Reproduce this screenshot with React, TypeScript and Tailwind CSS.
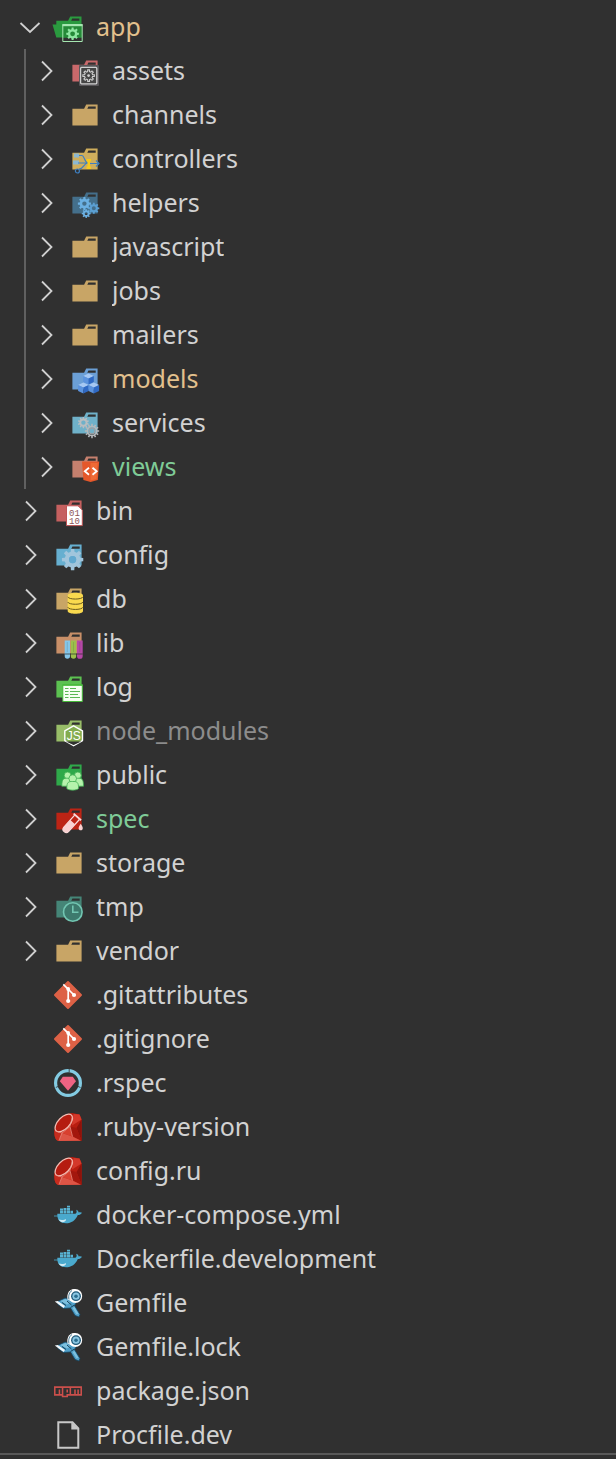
import { useState } from 'react'
import type { ReactNode } from 'react'
import { clsx } from 'clsx'
import { FaNpm } from 'react-icons/fa'

type Status = 'modified' | 'untracked' | 'ignored'

interface TreeNode {
  name: string
  icon: ReactNode
  status?: Status
  folder?: boolean
  children?: TreeNode[]
}

// Outline of a cog, used by most of the folder badges
function cog(cx: number, cy: number, r: number, teeth = 8, depth = 0.26) {
  const step = (Math.PI * 2) / teeth
  const inner = r * (1 - depth)
  const points: string[] = []
  for (let i = 0; i < teeth; i++) {
    const a = i * step - Math.PI / 2
    const corners = [
      [inner, -0.3],
      [r, -0.2],
      [r, 0.2],
      [inner, 0.3],
    ]
    corners.forEach(([d, t]) => {
      points.push(`${(cx + d * Math.cos(a + t * step)).toFixed(2)} ${(cy + d * Math.sin(a + t * step)).toFixed(2)}`)
    })
  }
  return `M${points.join('L')}Z`
}

function ring(cx: number, cy: number, r: number) {
  return `M${cx - r} ${cy}a${r} ${r} 0 1 0 ${r * 2} 0a${r} ${r} 0 1 0 ${-r * 2} 0Z`
}

function Glyph({ children }: { children: ReactNode }) {
  return (
    <svg viewBox="0 0 32 32" className="size-8 shrink-0" aria-hidden="true">
      {children}
    </svg>
  )
}

function Folder({ color, children }: { color: string; children?: ReactNode }) {
  return (
    <Glyph>
      <path fill={color} d="M27.5 5.5H18.2L16.1 9.7H4.4V26.5H29.6V5.5Zm.2 4.2H19.3l1.1-2.1h7.3Z" />
      {children}
    </Glyph>
  )
}

function Cog({ x, y, r, hole, fill, teeth }: { x: number; y: number; r: number; hole: number; fill: string; teeth?: number }) {
  return <path fill={fill} fillRule="evenodd" d={cog(x, y, r, teeth) + ring(x, y, hole)} />
}

function Cube({ x, y }: { x: number; y: number }) {
  return (
    <g transform={`translate(${x} ${y})`}>
      <path fill="#a6c8f3" d="M0-5.4 5.3-3 0-.4-5.3-3Z" />
      <path fill="#5b93de" d="M-5.3-3 0-.4V5.6L-5.3 3Z" />
      <path fill="#2f69c4" d="M5.3-3 0-.4V5.6L5.3 3Z" />
    </g>
  )
}

const plainFolder = <Folder color="#c8a566" />

const appIcon = (
  <Glyph>
    <path fill="#2a9a3f" d="M27.4 5.5H18.2L16.1 9.7H4.3V13.5H.5L4.3 26.5H29.5V5.5Zm0 4.2H19.2l1-2.1h7.2Z" />
    <path fill="#258a38" d="M11 14h19v12.5H11Z" />
    <path fill="none" stroke="#a5e6b0" d="M10.8 13.5H30.2V30.5H10.8Z" />
    <path fill="#a5e6b0" d="M10.5 13h20v2.2h-20Z" />
    <Cog x={20.6} y={22.8} r={6.4} hole={2.4} fill="#8ee6a0" />
  </Glyph>
)

const assetsIcon = (
  <Folder color="#c9696b">
    <rect x="11" y="10" width="20" height="21" rx="1" fill="#59575a" />
    <rect x="12.6" y="12.4" width="16.2" height="16.4" rx="1" fill="#454545" stroke="#d0d0d0" strokeWidth="1.3" />
    <path d={cog(20.6, 20.6, 5.8, 8, 0.3)} fill="none" stroke="#d0d0d0" strokeWidth="1.1" />
    <circle cx="20.6" cy="20.6" r="1.4" fill="#d0d0d0" />
  </Folder>
)

const controllersIcon = (
  <Folder color="#cfae5c">
    <path fill="#8cb8cf" d="M6 10.5h5v4H6ZM5 17.5h6v4H5Z" />
    <g fill="none" stroke="#3f7fc0" strokeWidth="1.2">
      <path d="M11 12.5h3c2.5 0 2 6.5 6 7.5M10 20h10M11 26c5 0 4-5.5 9-6M22 20.5h8M28 17.5l3 3-3 3" />
      <circle cx="9.4" cy="28" r="2" fill="#303030" />
    </g>
    <path fill="#f6ca1c" d="M18.5 16h4.5v2l-1 1v4l1 1v2h-4.5v-2l1-1v-4l-1-1Z" />
  </Folder>
)

const helpersIcon = (
  <Folder color="#446f8b">
    <Cog x={16.4} y={16.6} r={6.6} hole={2.2} fill="#6bb0e2" />
    <Cog x={25.8} y={21.3} r={5.6} hole={2} fill="#5b9fd2" />
    <Cog x={18.2} y={26.6} r={4.5} hole={1.5} fill="#6bb0e2" />
  </Folder>
)

const modelsIcon = (
  <Folder color="#6b9fd6">
    <Cube x={20.5} y={16} />
    <Cube x={15.4} y={25} />
    <Cube x={25.8} y={25} />
  </Folder>
)

const servicesIcon = (
  <Folder color="#6fb1c9">
    <Cog x={15.4} y={15.6} r={5.6} hole={2.2} fill="#b9bdc0" teeth={10} />
    <Cog x={24} y={24} r={7.2} hole={3.8} fill="#b4b8bb" teeth={12} />
    <circle cx="24" cy="24" r="2.8" fill="none" stroke="#9aa0a4" strokeWidth="1.2" />
  </Folder>
)

const viewsIcon = (
  <Folder color="#c5806e">
    <path fill="#e4572a" d="M14 10.5H31.2L29.8 29 22.6 31 15.4 29Z" />
    <path fill="#ef6a35" d="M22.6 12H29.7L28.5 28 22.6 29.5Z" />
    <path fill="none" stroke="#fff" strokeWidth="1.8" d="M21 16.8 16.8 20.3 21 23.8M24.5 16.8l4.2 3.5-4.2 3.5" />
  </Folder>
)

const binIcon = (
  <Folder color="#c5605f">
    <path fill="#fff" stroke="#bf5556" d="M14.5 10.8H26L30.3 15V30.6H14.5Z" />
    <g fill="#8c5658" fontSize="9" fontFamily="Liberation Mono, monospace" textAnchor="middle">
      <text x="22.4" y="20.5">01</text>
      <text x="22.4" y="28.5">10</text>
    </g>
  </Folder>
)

const configIcon = (
  <Folder color="#66afd0">
    <Cog x={20.6} y={20.6} r={10.8} hole={3.6} fill="#a1c5dc" />
    <circle cx="20.6" cy="20.6" r="3.6" fill="#62a9d0" />
  </Folder>
)

const dbIcon = (
  <Folder color="#c8a566">
    <path fill="#f9d94e" d="M15.7 12.5c0-3.6 15.3-3.6 15.3 0V28c0 3.7-15.3 3.7-15.3 0Z" />
    <path fill="none" stroke="#6b5a1e" d="M15.7 13.8c1 3 14.3 3 15.3 0M15.7 19c1 3 14.3 3 15.3 0M15.7 24.2c1 3 14.3 3 15.3 0" />
  </Folder>
)

const libIcon = (
  <Folder color="#c88f68">
    <path fill="#85c6ea" d="M12.700 13.500H18V29a2 2 0 0 1-5.300 0Z" />
    <path fill="#9cbf4b" d="M18.800 13.500h5.400V29a2 2 0 0 1-5.400 0Z" />
    <path fill="#b547a6" d="M25 13.500h5.700V29a2 2 0 0 1-5.700 0Z" />
    <path stroke="#303030" strokeOpacity=".65" strokeWidth="1.100" d="M12.700 27H30.700" />
    <path stroke="#303030" strokeOpacity=".2" strokeWidth=".8" d="M15.300 15v10M21.500 15v10M27.800 15v10" />
  </Folder>
)

const logIcon = (
  <Folder color="#5cc151">
    <path fill="#f6fff2" stroke="#45b939" d="M10.8 13.8H30.3V30.5H10.8Z" />
    <path fill="#45b939" d="M10.5 13.3h20v1.5h-20Z" />
    <path stroke="#59b852" strokeWidth="1.1" d="M13 17.5h3.500M18 17.500h6M13 20.500h3.500M18 20.500h10M13 23.500h3.500M18 23.500h8M13 26.500h3.500M18 26.500h10" />
  </Folder>
)

const nodeModulesIcon = (
  <Folder color="#98bd68">
    <path fill="#83ac4f" stroke="#fff" strokeWidth="1.4" strokeLinejoin="round" d="M21.6 10.8 30.5 15.8V25.6L21.6 30.7 12.8 25.6V15.8Z" />
    <path fill="#303030" d="M13.9 26.5H29.3L21.6 30Z" />
    <text x="21.8" y="25" textAnchor="middle" fontSize="12" fontFamily="Liberation Sans, sans-serif" fill="#fff">JS</text>
  </Folder>
)

const publicIcon = (
  <Folder color="#2fa94a">
    <g fill="#b5f2ac" stroke="#3fae52" strokeWidth=".8">
      <circle cx="15.6" cy="16.4" r="3.4" />
      <circle cx="25.8" cy="16.4" r="3.4" />
      <path d="M9.8 27.2c0-8 2-8 6-8s5 2 5 8ZM31.5 27.2c0-8-2-8-6-8s-5 2-5 8Z" />
      <circle cx="20.7" cy="19.6" r="3.8" />
      <path d="M14.8 29.500c0-7 2-7 5.900-7s5.900 0 5.900 7c-2 2.200-9.800 2.200-11.800 0Z" />
    </g>
  </Folder>
)

const specIcon = (
  <Folder color="#bd2415">
    <g transform="rotate(42 19 21)">
      <path fill="#bd2415" stroke="#f8dcdc" strokeWidth="1.3" d="M15.8 12v16a3.2 3.2 0 0 0 6.4 0V12" />
      <path fill="#fad1d1" d="M15.8 18.5h6.4V28a3.2 3.2 0 0 1-6.4 0Z" />
      <path stroke="#f8dcdc" strokeWidth="1.8" d="M14 11.5h10" />
    </g>
    <path fill="#fad1d1" d="M28.7 20.8c3 4 2.5 6.5 0 6.5s-3-2.5 0-6.5Z" />
  </Folder>
)

const tmpIcon = (
  <Folder color="#458577">
    <circle cx="20.8" cy="21" r="9.3" fill="#3d7a6d" stroke="#72c6b2" strokeWidth="1.6" />
    <path fill="none" stroke="#72c6b2" strokeWidth="1.6" d="M20.8 14.5V21.3H26.5" />
  </Folder>
)

const gitIcon = (
  <Glyph>
    <path fill="#dd6146" stroke="#dd6146" strokeWidth="2" strokeLinejoin="round" d="M16 3 29 16 16 29 3 16Z" />
    <path fill="none" stroke="#fff" strokeWidth="1.7" d="M11.3 5.3 22 16M16.2 10v12" />
    <circle cx="16.2" cy="10" r="1.9" fill="#fff" />
    <circle cx="22" cy="16" r="2.1" fill="#fff" />
    <circle cx="16.2" cy="22" r="2.1" fill="#fff" />
  </Glyph>
)

const rspecIcon = (
  <Glyph>
    <circle cx="16" cy="16" r="12.4" fill="none" stroke="#83cbe2" strokeWidth="3.2" />
    <path stroke="#303030" strokeWidth=".8" d="M17.2 2v3.5M3.8 20.5 7 19M25 19l3.5 1.5" />
    <path fill="#ee6383" d="M10.8 9.8H20.8L24 14.2 16 23.8 7.8 14.2Z" />
  </Glyph>
)

const rubyIcon = (
  <Glyph>
    <path fill="#b81d10" d="M2.500 18C6 9 13 2.500 20 2L27.500 3.500 29.600 8.500V29.800L7 30C3 29.500 2 25 2.500 18Z" />
    <path fill="#d4382a" d="M21.500 3 27.500 3.500 29.600 8.500 20 14.500Z" />
    <path fill="#8f120a" d="M29.600 8.500 24.500 17 29.600 29.800Z" />
    <path fill="#d8402f" d="M10 22 18 15.500 20.500 25.500Z" />
    <path fill="#a3170d" d="M18 15.500 24.500 17 29.600 29.800 20.500 25.500Z" />
    <path fill="#dd5546" d="M10 22 20.500 25.500 29 29.800 7 30Z" />
    <path fill="#c72c1e" d="M2.500 19 10 22 7 30C3 29.500 2 25 2.500 19Z" />
    <ellipse cx="11.800" cy="12" rx="11" ry="5.800" fill="#b51c10" stroke="#f3bdb4" strokeWidth="1.200" transform="rotate(-46 11.800 12)" />
    <path fill="none" stroke="#ef9a8e" strokeWidth=".7" d="M3.500 20 10 22 18 15.500 20.500 5M10 22 7 29.500M18 15.500 20.500 25.500" />
  </Glyph>
)

const dockerIcon = (
  <Glyph>
    <path fill="#58b3d3" d="M8 11.8h3v2.7H8ZM11.5 11.8h3v2.7h-3ZM15 11.8h3v2.7h-3ZM11.5 9h3v2.4h-3ZM8 9.400h3v2H8ZM15 9h3v2.400h-3ZM15 6.800h3v1.800h-3ZM18.500 11.800h2.500v2.700h-2.500Z" />
    <path fill="#4aa9cd" d="M5.300 14.800H22.500C24.800 14.800 25 12.800 24.200 10.800 26 11.300 26.500 12.500 26.700 13.500 28 13 29 13.300 30 13.700 29 15.500 27.500 16 25.800 16 23.500 21.500 19.500 24.300 14 24.300 8.500 24.300 5 21.500 5.300 14.800Z" />
    <path fill="#cfe9f2" d="M6.500 20.500c3 .8 6 .5 7.500-.5.500 2-1.500 3-4 3.200-1.500-.5-2.800-1.500-3.500-2.700Z" />
    <path stroke="#4aa9cd" strokeWidth=".8" d="M2 17H8" />
  </Glyph>
)

const bundlerIcon = (
  <Glyph>
    <path fill="#4f9fc8" stroke="#17435c" strokeWidth=".8" d="M5.500 14.500 13 11 19 12 24 16.500 22.500 18.500 28 27.500 27 30 23 28.500 18.500 21 11.500 21.500 6 17.500Z" />
    <path fill="#f2f7fa" d="M2.800 14.500 5.800 14 13 19 11.500 21Z" />
    <path fill="#7dc0de" d="M8.500 14 13.500 12 18.500 15.500 15 17.500ZM20.500 21 22.500 20 26.500 26.800 24.500 27.500Z" />
    <path fill="none" stroke="#17435c" strokeWidth="1" d="M10 15.500 14 18.500M15 14 19.500 18M18.500 20.500 22.500 18" />
    <path fill="#fff" d="M15.500 12.500C14.500 6 17.500 1.800 23 2L25 15 20 14.500Z" />
    <circle cx="23.300" cy="9" r="6.900" fill="#fff" />
    <circle cx="24" cy="9.200" r="4.900" fill="#1d5878" />
    <circle cx="24" cy="9.200" r="3.600" fill="#8ac6e2" />
    <circle cx="24" cy="9.200" r="1.800" fill="#2b6f91" />
    <path fill="none" stroke="#245f7d" strokeWidth=".8" d="M17 12.500C16 8.500 17.500 5 20 3.500" />
  </Glyph>
)

const npmIcon = (
  <span className="flex size-8 shrink-0 items-center justify-center text-[#cb4f4b]">
    <FaNpm size={28} aria-hidden="true" />
  </span>
)

const fileIcon = (
  <Glyph>
    <path fill="none" stroke="#c8c8c8" strokeWidth="2" d="M6.3 3.3H20.5L26.3 9.5V28.8H6.3Z" />
    <path fill="#c8c8c8" d="M19.3 3v7.5H27Z" />
  </Glyph>
)

const tree: TreeNode[] = [
  {
    name: 'app',
    icon: appIcon,
    status: 'modified',
    folder: true,
    children: [
      { name: 'assets', icon: assetsIcon, folder: true },
      { name: 'channels', icon: plainFolder, folder: true },
      { name: 'controllers', icon: controllersIcon, folder: true },
      { name: 'helpers', icon: helpersIcon, folder: true },
      { name: 'javascript', icon: plainFolder, folder: true },
      { name: 'jobs', icon: plainFolder, folder: true },
      { name: 'mailers', icon: plainFolder, folder: true },
      { name: 'models', icon: modelsIcon, folder: true, status: 'modified' },
      { name: 'services', icon: servicesIcon, folder: true },
      { name: 'views', icon: viewsIcon, folder: true, status: 'untracked' },
    ],
  },
  { name: 'bin', icon: binIcon, folder: true },
  { name: 'config', icon: configIcon, folder: true },
  { name: 'db', icon: dbIcon, folder: true },
  { name: 'lib', icon: libIcon, folder: true },
  { name: 'log', icon: logIcon, folder: true },
  { name: 'node_modules', icon: nodeModulesIcon, folder: true, status: 'ignored' },
  { name: 'public', icon: publicIcon, folder: true },
  { name: 'spec', icon: specIcon, folder: true, status: 'untracked' },
  { name: 'storage', icon: plainFolder, folder: true },
  { name: 'tmp', icon: tmpIcon, folder: true },
  { name: 'vendor', icon: plainFolder, folder: true },
  { name: '.gitattributes', icon: gitIcon },
  { name: '.gitignore', icon: gitIcon },
  { name: '.rspec', icon: rspecIcon },
  { name: '.ruby-version', icon: rubyIcon },
  { name: 'config.ru', icon: rubyIcon },
  { name: 'docker-compose.yml', icon: dockerIcon },
  { name: 'Dockerfile.development', icon: dockerIcon },
  { name: 'Gemfile', icon: bundlerIcon },
  { name: 'Gemfile.lock', icon: bundlerIcon },
  { name: 'package.json', icon: npmIcon },
  { name: 'Procfile.dev', icon: fileIcon },
]

function Chevron({ open }: { open: boolean }) {
  return (
    <svg viewBox="0 0 32 32" className="size-8 shrink-0" fill="none" stroke="#d0d0d0" strokeWidth="1.8" aria-hidden="true">
      <path d={open ? 'M6.5 12 16 21 25.5 12' : 'M12 6.5 21.5 16 12 25.5'} />
    </svg>
  )
}

function TreeItem({ node, nested = false }: { node: TreeNode; nested?: boolean }) {
  const [open, setOpen] = useState(Boolean(node.children))

  return (
    <li>
      <button
        type="button"
        onClick={() => node.folder && setOpen(!open)}
        aria-expanded={node.folder ? open : undefined}
        className={clsx('flex h-11 w-full items-center text-left', nested ? 'pl-1' : 'pl-3.5')}
      >
        {node.folder ? <Chevron open={open} /> : <span className="size-8 shrink-0" />}
        <span className="ml-1.5">{node.icon}</span>
        <span
          className={clsx(
            'ml-3 truncate pb-0.5 text-[25px] leading-8',
            !node.status && 'text-[#d2d2d2]',
            node.status === 'modified' && 'text-[#e2c08d]',
            node.status === 'untracked' && 'text-[#7fcb97]',
            node.status === 'ignored' && 'text-[#8c8c8c]'
          )}
        >
          {node.name}
        </span>
      </button>
      {open && node.children && (
        <ul className="ml-6 border-l-2 border-[#606060]">
          {node.children.map(child => (
            <TreeItem key={child.name} node={child} nested />
          ))}
        </ul>
      )}
    </li>
  )
}

export default function App() {
  return (
    <div className="flex min-h-screen flex-col bg-[#303030] font-['Noto_Sans',sans-serif]">
      <nav aria-label="Files" className="-mb-1 pt-[5px]">
        <ul>
          {tree.map(node => (
            <TreeItem key={node.name} node={node} />
          ))}
        </ul>
      </nav>
      {/* Divider above the next sidebar section */}
      <div className="h-1.5 border-t-2 border-[#595959]" />
    </div>
  )
}
